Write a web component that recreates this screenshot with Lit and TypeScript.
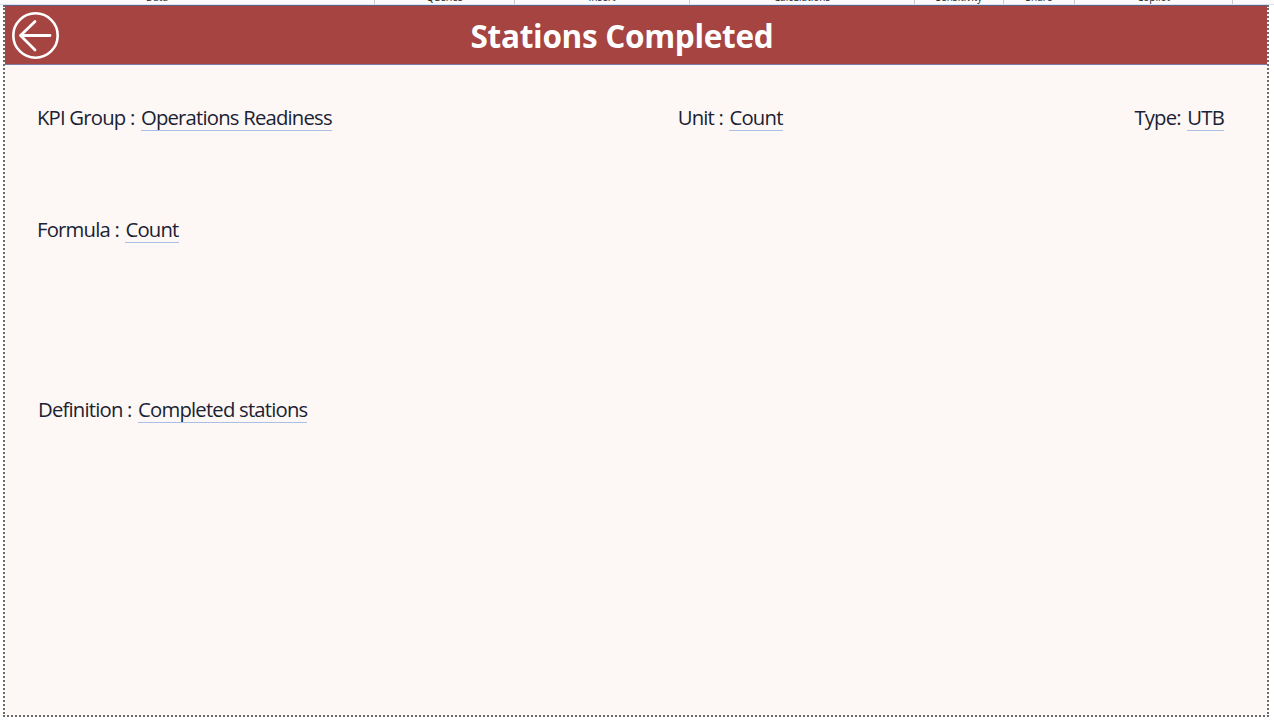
import {LitElement, html, css} from 'lit';
import {customElement} from 'lit/decorators.js';

const TABS = [
  {label: 'Data', width: 375, inset: 60},
  {label: 'Queries', width: 140, inset: 0},
  {label: 'Insert', width: 175, inset: 0},
  {label: 'Calculations', width: 225, inset: 0},
  {label: 'Sensitivity', width: 89, inset: 0},
  {label: 'Share', width: 71, inset: 0},
  {label: 'Copilot', width: 158, inset: 0},
];

@customElement('app-root')
export class AppRoot extends LitElement {
  static override styles = css`
    :host {
      display: block;
      width: 1274px;
      height: 720px;
      overflow: hidden;
      background: #ffffff;
      font-family: 'Open Sans', 'Noto Sans', sans-serif;
    }

    .ribbon {
      display: flex;
      height: 4px;
      overflow: hidden;
      background: #fbfbfb;
      border-bottom: 1px solid #d9e2ee;
    }

    .tab {
      flex: none;
      box-sizing: border-box;
      height: 4px;
      border-right: 1px solid #c8c8c8;
      text-align: center;
      font-size: 10px;
      line-height: 4px;
      color: #222222;
    }

    .tab span {
      display: block;
      margin-top: -5px;
    }

    .canvas {
      box-sizing: border-box;
      width: 1266px;
      height: 712px;
      margin-left: 3px;
      border-left: 2px dotted #6b6b6b;
      border-right: 2px dotted #6b6b6b;
      border-bottom: 2px dotted #6b6b6b;
      background: #fdf8f5;
    }

    .banner {
      display: flex;
      align-items: center;
      justify-content: center;
      height: 58px;
      padding-right: 28px;
      background: #a54441;
      border-top: 1px solid #5f5f86;
      border-bottom: 1px solid #7c7ca4;
      position: relative;
    }

    .banner h1 {
      margin: 0;
      font-size: 31.5px;
      font-weight: 700;
      letter-spacing: -0.3px;
      color: #ffffff;
    }

    .back {
      position: absolute;
      left: 7px;
      top: 6px;
      width: 47px;
      height: 47px;
    }

    .content {
      display: flex;
      flex-direction: column;
      padding: 0 43px 0 32px;
    }

    .row {
      display: flex;
      justify-content: space-between;
    }

    .row.first {
      margin-top: 39px;
    }

    .row.first .field:nth-child(2) {
      margin-right: 6px;
    }

    .row.formula {
      margin-top: 85px;
    }

    .row.definition {
      margin-top: 153px;
      padding-left: 1px;
    }

    .field {
      font-size: 20.3px;
      line-height: 27px;
      letter-spacing: -0.8px;
      color: #1a2233;
      white-space: nowrap;
    }

    .value {
      display: inline-block;
      margin-left: 2px;
      border-bottom: 1px solid #a9bfe3;
      line-height: 25px;
    }
  `;

  private field(label: string, value: string) {
    return html`<div class="field">${label} <span class="value">${value}</span></div>`;
  }

  override render() {
    return html`
      <div class="ribbon">
        ${TABS.map(
          (t) => html`<div class="tab" style="width:${t.width}px;padding-right:${t.inset}px"><span>${t.label}</span></div>`
        )}
      </div>
      <div class="canvas">
        <div class="banner">
          <svg class="back" viewBox="0 0 47 47" fill="none" stroke="#ffffff" stroke-linecap="round" stroke-linejoin="round">
            <circle cx="23.5" cy="23.5" r="22.2" stroke-width="2.6"></circle>
            <path d="M38 23.5H8.5M23 9.5L8.5 23.5L23 38" stroke-width="2.8"></path>
          </svg>
          <h1>Stations Completed</h1>
        </div>
        <div class="content">
          <div class="row first">
            ${this.field('KPI Group :', 'Operations Readiness')}
            ${this.field('Unit :', 'Count')}
            ${this.field('Type:', 'UTB')}
          </div>
          <div class="row formula">${this.field('Formula :', 'Count')}</div>
          <div class="row definition">${this.field('Definition :', 'Completed stations')}</div>
        </div>
      </div>
    `;
  }
}

declare global {
  interface HTMLElementTagNameMap {
    'app-root': AppRoot;
  }
}
